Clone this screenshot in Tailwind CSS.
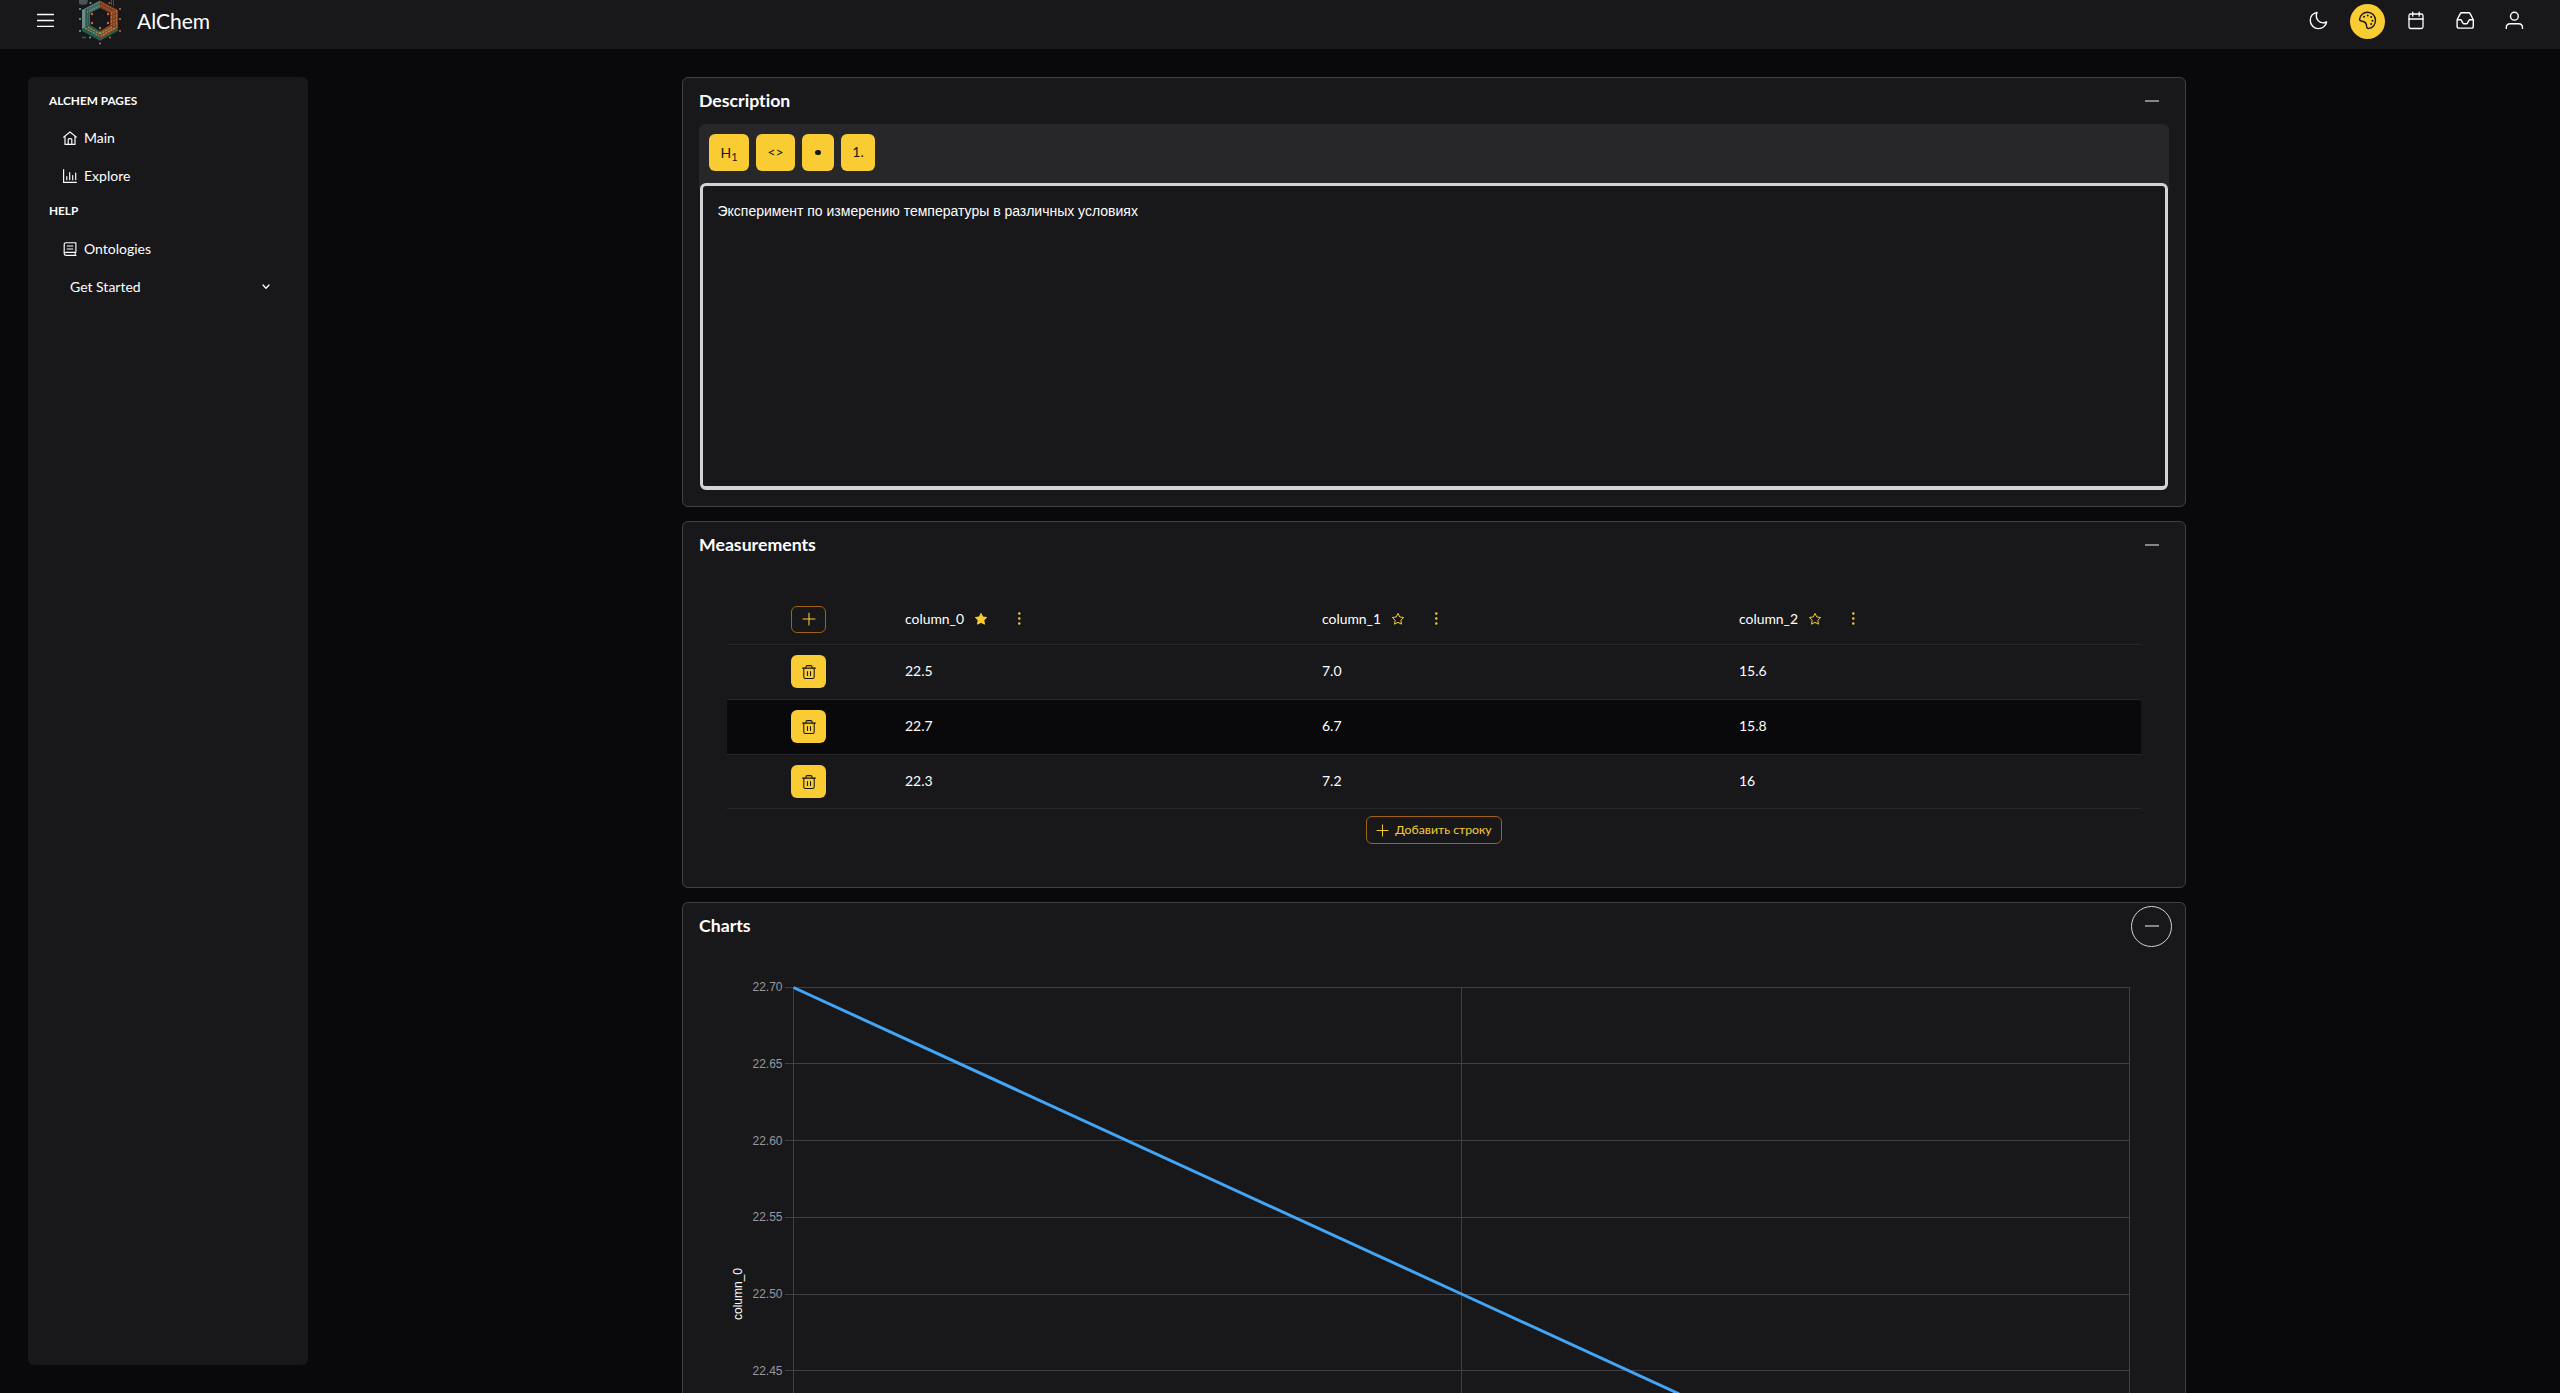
<!DOCTYPE html>
<html lang="en">
<head>
<meta charset="utf-8">
<title>AlChem</title>
<script src="https://cdn.jsdelivr.net/npm/@tailwindcss/browser@4"></script>
</head>
<body class="bg-[#09090b] text-white font-['Lato',sans-serif] text-sm h-screen overflow-hidden">

<!-- Shared icons -->
<svg class="hidden">
  <symbol id="plus" viewBox="0 0 14 14"><path d="M7 1v12M1 7h12" fill="none" stroke="currentColor" stroke-width="1.05" stroke-linecap="round"/></symbol>
  <symbol id="trash" viewBox="0 0 14 14"><g fill="none" stroke="currentColor" stroke-linecap="round" stroke-linejoin="round"><path d="M.6 3.1h12.8" stroke-width="1.1"/><path d="M1.8 3.1v8.8q0 1.5 1.5 1.5h7.4q1.5 0 1.5-1.5V3.1M3.9 3.1V2Q3.9.6 5.3.6h3.4q1.4 0 1.4 1.4v1.1M5.500 6.400v4M8.500 6.400v4" stroke-width="1.05"/></g></symbol>
  <symbol id="star" viewBox="0 0 14 14"><path d="M7 1.4l1.75 3.55 3.9.57-2.83 2.75.67 3.9L7 10.33l-3.49 1.84.67-3.9L1.35 5.52l3.9-.57z" stroke="currentColor" stroke-width="1" stroke-linejoin="round"/></symbol>
  <symbol id="dots" viewBox="0 0 14 14"><circle cx="7.300" cy="1.500" r="1.200"/><circle cx="7.300" cy="6.500" r="1.200"/><circle cx="7.300" cy="11.500" r="1.200"/></symbol>
</svg>

<header class="h-[49px] bg-[#18181b] flex items-start pl-[37px] pr-7">
  <svg class="w-[17px] h-[17px] mt-3" viewBox="0 0 17 17"><path d="M.5 2.5h16M.5 8.5h16M.5 14.3h16" stroke="#fff" stroke-width="1.3" stroke-linecap="round"/></svg>
  <svg class="w-[42px] h-[46px] ml-[25px]" viewBox="79 0 42 46">
    <path d="M79 0h9l-1 4-4 1-4-1z" fill="#4b5452"/>
    <path d="M111.500 0v5M113.500 0v6" stroke="#4a4c4e" stroke-width="1"/>
    <path d="M100 .5L82 10v19l8-4V13l10-5z" fill="#41695f"/>
    <path d="M82 10v19l3-1.500V9z" fill="#6f8b84"/>
    <path d="M86.500 9v17M88.500 9v16" stroke="#2c564f" stroke-width="1"/>
    <path d="M85 9l15-7.500M87 12l13-6.500" stroke="#7ea195" stroke-width=".8" stroke-dasharray="1.500 1"/>
    <path d="M100 .5L118 10v19l-8-4V13l-10-5z" fill="#7d3d20"/>
    <path d="M111.500 12v13M114 11v15M116.500 10v18" stroke="#b56a3a" stroke-width="1" stroke-dasharray="3 1"/>
    <path d="M101 2.500l15 8M101 5.500l12 7" stroke="#bd6c3d" stroke-width=".8" stroke-dasharray="1.500 1"/>
    <path d="M82 29l8-4 10 6v9z" fill="#285c53"/>
    <path d="M118 29l-8-4-10 6v9z" fill="#7f4a26"/>
    <path d="M85 28l14 8M88 27l11 6.500" stroke="#b88c46" stroke-width="1.300" stroke-dasharray="2 1"/>
    <path d="M115 28l-14 8M112 27l-11 6.500" stroke="#c08d4a" stroke-width="1.200" stroke-dasharray="2 1"/>
    <path d="M82 30l18 10 18-10" fill="none" stroke="#1d6156" stroke-width="1.500"/>
    <path d="M100 9l9.500 5v10.500L100 29l-9.500-4.500V14z" fill="#18181b"/>
    <g fill="#c9673a"><circle cx="92" cy="14" r="1.200"/><circle cx="108" cy="14" r="1.200"/><circle cx="92" cy="23" r="1.200"/><circle cx="108" cy="23" r="1.200"/><circle cx="100" cy="28" r="1.200"/><circle cx="100" cy="43.500" r="1"/><circle cx="110" cy="37.500" r="1"/><circle cx="120" cy="31" r="1"/><circle cx="120" cy="19" r="1"/><circle cx="120" cy="9" r="1"/><circle cx="109.500" cy="3" r="1"/></g>
    <g fill="#6fae9f"><circle cx="80" cy="9" r="1"/><circle cx="80" cy="19" r="1"/><circle cx="80" cy="31" r="1"/><circle cx="90" cy="37.500" r="1"/><circle cx="90.500" cy="3" r="1"/><circle cx="100" cy="33" r="1"/></g>
    <path d="M82 37.500h4" stroke="#4b5452" stroke-width="1.500"/>
  </svg>
  <span class="ml-4 text-[21px] leading-[42px] [font-variant-ligatures:none]">AlChem</span>
  <nav class="ml-auto mt-1 flex gap-3.5">
    <span class="size-[35px] flex justify-center pt-[7px]"><svg class="size-[19px]" viewBox="0 0 19 19" fill="none" stroke="#fff" stroke-width="1.400" stroke-linejoin="round"><path d="M8 1.400C3.900 2.300 1.300 5.500 1.300 9.400c0 4.500 3.600 8.200 8.200 8.200 4 0 7.300-2.700 8.100-6.600-1.200.6-2.200.9-3.400.9-3.800 0-6.900-3.100-6.900-6.900 0-1.300.2-2.500.7-3.600z"/></svg></span>
    <span class="size-[35px] rounded-full bg-[#f9cc33] flex justify-center pt-[7px]"><svg class="size-[19px]" viewBox="0 0 19 19"><path d="M1.600 8.300C2 4.300 5.300 1.200 9.500 1.200c4.400 0 8 3.600 8 8.100 0 4.200-2.700 7.500-6.400 8.100-1.500.2-2.400-.3-2.400-1.600 0-3.500-1-5.200-4.700-5.600-1.800-.2-2.500-.6-2.400-1.900z" fill="none" stroke="#18181b" stroke-width="1.400"/><g fill="#18181b"><circle cx="6" cy="5.800" r="1"/><circle cx="9.700" cy="4.600" r="1"/><circle cx="13.200" cy="6.100" r="1"/><circle cx="14.500" cy="9.700" r="1"/><circle cx="13.100" cy="13.100" r="1"/></g></svg></span>
    <span class="size-[35px] flex justify-center pt-[7px]"><svg class="size-[19px]" viewBox="0 0 19 19" fill="none" stroke="#fff" stroke-width="1.300" stroke-linecap="round"><rect x="2" y="3" width="14" height="14.500" rx="1.800"/><path d="M2 8h14M5.700 1.200v4M12.200 1.200v4"/></svg></span>
    <span class="size-[35px] flex justify-center pt-[7px]"><svg class="size-[19px]" viewBox="0 0 19 19" fill="none" stroke="#fff" stroke-width="1.400" stroke-linejoin="round"><path d="M1.100 8.800v6.400q0 1.900 1.900 1.900h12.400q1.900 0 1.900-1.900V8.800L14.100 2.600q-.4-.9-1.300-.9H5.600q-.9 0-1.300.9z"/><path d="M1.100 8.800h4l1.900 3.400q.3.500.9.500h2.600q.6 0 .9-.5l1.900-3.400h4"/></svg></span>
    <span class="size-[35px] flex justify-center pt-[7px]"><svg class="size-[19px]" viewBox="0 0 19 19" fill="none" stroke="#fff" stroke-width="1.400" stroke-linecap="round"><circle cx="9.400" cy="5.200" r="3.900"/><path d="M1.300 17.400v-.7q0-3.900 3.900-3.900h8.400q3.900 0 3.900 3.900v.7"/></svg></span>
  </nav>
</header>

<div class="flex items-start pl-7 pt-7">
  <aside class="w-[280px] h-[1288px] rounded-md bg-[#18181b] pt-[7px]">
    <h6 class="h-[35px] pl-[21px] leading-[34px] text-[11.8px] font-bold">ALCHEM PAGES</h6>
    <a class="h-[38px] pl-[35px] flex items-center gap-[7px]"><svg class="size-3.5" viewBox="0 0 14 14" fill="none" stroke="#fff" stroke-width="1.150" stroke-linejoin="round" stroke-linecap="round"><path d="M.6 6.100L7 1l6.400 5.100M2 5.100v8.300h10V5.100M5.200 13.200V8.800q0-1.200 1.200-1.200h1.200q1.200 0 1.200 1.200v4.400"/></svg>Main</a>
    <a class="h-[38px] pl-[35px] flex items-center gap-[7px]"><svg class="size-3.5" viewBox="0 0 14 14" fill="none" stroke="#fff" stroke-width="1.150" stroke-linecap="round"><path d="M.6.600v12.800h12.800M3.800 7.500v3.200M6.700 3.500v7.200M9.700 6.500v4.200M12.700 4v6.700"/></svg>Explore</a>
    <h6 class="h-[35px] pl-[21px] leading-[32px] text-[11.8px] font-bold">HELP</h6>
    <a class="h-[38px] pl-[35px] flex items-center gap-[7px]"><svg class="size-3.5" viewBox="0 0 14 14" fill="none" stroke="#fff" stroke-width="1.150" stroke-linecap="round" stroke-linejoin="round"><path d="M12.900 10.300V.7H3Q1.200.7 1.200 2.500v9q0 1.900 1.900 1.900h9.800M3.100 10.300h9.800M12.200 10.500v2.700M3.100 10.300q-1.900 0-1.900 1.500M4.200 4h5.600M4.200 7h5.600"/></svg>Ontologies</a>
    <a class="h-[38px] pl-[42px] pr-[38px] flex items-center justify-between">Get Started<svg class="w-2 h-2" viewBox="0 0 8 8" fill="none" stroke="#fff" stroke-width="1.300" stroke-linecap="round" stroke-linejoin="round"><path d="M1 2l3 3.200L7 2"/></svg></a>
  </aside>

  <main class="ml-[374px] w-[1504px] flex flex-col gap-3.5">
    <!-- Description -->
    <section class="h-[430px] rounded-md border border-[#3f3f46] bg-[#18181b]">
      <div class="h-[46px] pl-4 pr-[13px] flex items-center justify-between">
        <h2 class="text-[17.7px] font-bold leading-none pb-px [font-variant-ligatures:none]">Description</h2>
        <span class="size-[41px] flex items-center justify-center"><span class="w-3.5 h-0.5 bg-[#85858c]"></span></span>
      </div>
      <div class="mx-4 w-[1470px]">
        <div class="h-[66px] -mb-[7px] rounded-t-md bg-[#27272a] px-2.5 pt-2.5 flex items-start gap-[7px] text-[#18181b]">
          <span class="w-10 h-[37px] rounded-md bg-[#f9cc33] flex items-center justify-center"><span class="leading-5 pt-px">H<sub class="text-[11px] leading-none">1</sub></span></span>
          <span class="w-[39px] h-[37px] rounded-md bg-[#f9cc33] flex items-center justify-center pb-0.5">&lt;&gt;</span>
          <span class="w-8 h-[37px] rounded-md bg-[#f9cc33] flex items-center justify-center"><span class="size-[5.500px] rounded-full bg-[#18181b]"></span></span>
          <span class="w-[34px] h-[37px] rounded-md bg-[#f9cc33] flex items-center justify-center pb-0.5">1.</span>
        </div>
        <div class="relative mx-px h-[307px] rounded-md border-[3px] border-b-4 border-[#d4d4d8] bg-[#18181b] pl-[14.500px] pt-[14px] leading-[22px] font-['Liberation_Sans',sans-serif]">Эксперимент по измерению температуры в различных условиях</div>
      </div>
    </section>

    <!-- Measurements -->
    <section class="h-[367px] rounded-md border border-[#3f3f46] bg-[#18181b]">
      <div class="h-[46px] pl-4 pr-[13px] flex items-center justify-between">
        <h2 class="text-[17.7px] font-bold leading-none pb-px [font-variant-ligatures:none]">Measurements</h2>
        <span class="size-[41px] flex items-center justify-center"><span class="w-3.5 h-0.5 bg-[#85858c]"></span></span>
      </div>
      <div class="mt-[26px] mx-11">
        <div class="h-[51px] border-b border-[#27272a] grid grid-cols-[164px_417px_417px_416px] items-center">
          <span class="ml-16 w-[35px] h-[27px] rounded-md border border-[#a16216] text-[#f9cc33] flex items-center justify-center"><svg class="size-3.5"><use href="#plus"/></svg></span>
          <span class="pl-3.5 pb-px flex items-center text-[#f9cc33]"><span class="text-white w-[59px] text-[13.900px]">column_0</span><svg class="size-3.5 ml-[10px] mt-0.5 fill-current"><use href="#star"/></svg><svg class="size-3.5 ml-[24px] mt-0.5 fill-current"><use href="#dots"/></svg></span>
          <span class="pl-3.5 pb-px flex items-center text-[#f9cc33]"><span class="text-white w-[59px] text-[13.900px]">column_1</span><svg class="size-3.5 ml-[10px] mt-0.5 fill-none"><use href="#star"/></svg><svg class="size-3.5 ml-[24px] mt-0.5 fill-current"><use href="#dots"/></svg></span>
          <span class="pl-3.5 pb-px flex items-center text-[#f9cc33]"><span class="text-white w-[59px] text-[13.900px]">column_2</span><svg class="size-3.5 ml-[10px] mt-0.5 fill-none"><use href="#star"/></svg><svg class="size-3.5 ml-[24px] mt-0.5 fill-current"><use href="#dots"/></svg></span>
        </div>
        <div class="h-[55px] border-b border-[#27272a] grid grid-cols-[164px_417px_417px_416px] items-center">
          <span class="ml-16 mb-px w-[35px] h-[33px] rounded-md bg-[#f9cc33] text-[#18181b] flex items-center justify-center"><svg class="size-3.5"><use href="#trash"/></svg></span>
          <span class="pl-3.5 pb-0.5">22.5</span><span class="pl-3.5 pb-0.5">7.0</span><span class="pl-3.5 pb-0.5">15.6</span>
        </div>
        <div class="h-[55px] border-b border-[#27272a] bg-[#09090b] grid grid-cols-[164px_417px_417px_416px] items-center">
          <span class="ml-16 mb-px w-[35px] h-[33px] rounded-md bg-[#f9cc33] text-[#18181b] flex items-center justify-center"><svg class="size-3.5"><use href="#trash"/></svg></span>
          <span class="pl-3.5 pb-0.5">22.7</span><span class="pl-3.5 pb-0.5">6.7</span><span class="pl-3.5 pb-0.5">15.8</span>
        </div>
        <div class="h-[54px] border-b border-[#27272a] grid grid-cols-[164px_417px_417px_416px] items-center">
          <span class="ml-16 w-[35px] h-[33px] rounded-md bg-[#f9cc33] text-[#18181b] flex items-center justify-center"><svg class="size-3.5"><use href="#trash"/></svg></span>
          <span class="pl-3.5 pb-px">22.3</span><span class="pl-3.5 pb-px">7.2</span><span class="pl-3.5 pb-px">16</span>
        </div>
        <div class="mt-[7px] flex justify-center">
          <span class="w-[136px] h-7 rounded-md border border-[#a16216] text-[#f9cc33] text-[12.250px] flex items-center justify-center gap-[6px] whitespace-nowrap"><svg class="size-[13px]"><use href="#plus"/></svg>Добавить строку</span>
        </div>
      </div>
    </section>

    <!-- Charts -->
    <section class="h-[491px] rounded-t-md border border-b-0 border-[#3f3f46] bg-[#18181b] overflow-hidden">
      <div class="h-[46px] pl-4 pr-[13px] flex items-center justify-between">
        <h2 class="text-[17.7px] font-bold leading-none pb-px [font-variant-ligatures:none]">Charts</h2>
        <span class="size-[41px] rounded-full border border-[#d4d4d8] flex items-center justify-center"><span class="w-3.5 h-0.5 bg-[#85858c]"></span></span>
      </div>
      <svg class="block w-[1502px] h-[444px] font-['Liberation_Sans',sans-serif]" viewBox="683 949 1502 444">
        <g stroke="#3f3f46" stroke-width="1">
          <path d="M785 987.500H2130M785 1063.500H2130M785 1140.500H2130M785 1217.500H2130M785 1294.500H2130M785 1370.500H2130M793.500 987V1393M1461.500 987V1393M2129.500 987V1393"/>
        </g>
        <path d="M793.500 987.500L1461.500 1294L1679 1393.800" fill="none" stroke="#42a5f5" stroke-width="3"/>
        <g fill="#97979e" font-size="12" text-anchor="end">
          <text x="782.500" y="991">22.70</text>
          <text x="782.500" y="1068">22.65</text>
          <text x="782.500" y="1145">22.60</text>
          <text x="782.500" y="1221">22.55</text>
          <text x="782.500" y="1298">22.50</text>
          <text x="782.500" y="1375">22.45</text>
        </g>
        <text transform="translate(742 1320) rotate(-90)" fill="#fff" font-size="12">column_0</text>
      </svg>
    </section>
  </main>
</div>
</body>
</html>
